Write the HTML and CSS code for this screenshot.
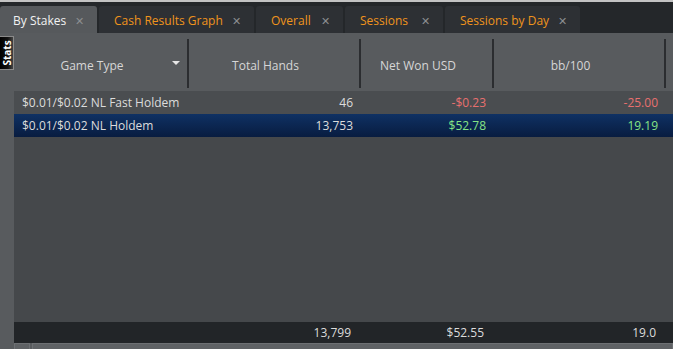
FILE: index.html
```html
<!DOCTYPE html>
<html lang="en">
<head>
    <meta charset="UTF-8">
    <meta name="viewport" content="width=device-width, initial-scale=1.0">
    <title>By Stakes</title>
    <link rel="stylesheet" href="styles.css">
</head>
<body>
    <div class="topline"></div>
    <div class="tabbar">
        <div class="tab active">By Stakes <span class="close">&#x2715;</span></div>
        <div class="tab">Cash Results Graph <span class="close">&#x2715;</span></div>
        <div class="tab">Overall <span class="close">&#x2715;</span></div>
        <div class="tab">Sessions <span class="close">&#x2715;</span></div>
        <div class="tab">Sessions by Day <span class="close">&#x2715;</span></div>
    </div>
    <div class="main">
        <div class="side">
            <div class="side-label"><span>Stats</span></div>
        </div>
        <div class="grid">
            <div class="head">
                <div class="hcell">Game Type <span class="sort"></span></div>
                <div class="hcell">Total Hands</div>
                <div class="hcell">Net Won USD</div>
                <div class="hcell">bb/100</div>
                <div class="hcell last"></div>
            </div>
            <div class="row">
                <div class="cell name">$0.01/$0.02 NL Fast Holdem</div>
                <div class="cell num">46</div>
                <div class="cell num neg">-$0.23</div>
                <div class="cell num neg">-25.00</div>
                <div class="cell"></div>
            </div>
            <div class="row selected">
                <div class="cell name">$0.01/$0.02 NL Holdem</div>
                <div class="cell num">13,753</div>
                <div class="cell num pos">$52.78</div>
                <div class="cell num pos">19.19</div>
                <div class="cell"></div>
            </div>
            <div class="empty"></div>
            <div class="row total">
                <div class="cell name"></div>
                <div class="cell num">13,799</div>
                <div class="cell num">$52.55</div>
                <div class="cell num">19.0</div>
                <div class="cell"></div>
            </div>
        </div>
    </div>
    <div class="bottom">
        <div class="btab first"></div>
        <div class="btab"></div>
    </div>
</body>
</html>
```

FILE: styles.css
```css
* { box-sizing: border-box; }
html, body { margin: 0; height: 100%; }
body { font-family: "Open Sans", "Noto Sans", sans-serif; font-size: 12px; background: #585b5e; display: flex; flex-direction: column; overflow: hidden; }

.topline { height: 2px; background: #c3c3c3; }

.tabbar { height: 31px; background: #24272a; display: flex; align-items: flex-end; gap: 2px; padding-top: 4px; }
.tab { height: 27px; background: #2d3034; color: #f0941c; display: flex; align-items: center; padding: 1px 13px 0 15px; border-radius: 3px 3px 0 0; white-space: nowrap; }
.tab:nth-child(1) { width: 97px; padding-left: 13px; }
.tab:nth-child(2) { width: 155px; }
.tab:nth-child(3) { width: 87px; }
.tab:nth-child(4) { width: 98px; }
.tab:nth-child(5) { width: 135px; }
.tab.active { background: #56595c; color: #f2f2f2; }
.close { margin-left: auto; color: #8c8e90; font-size: 11px; }

.main { flex: 1; display: flex; min-height: 0; }
.side { width: 14px; background: #585b5e; padding-top: 3px; }
.side-label { width: 14px; height: 34px; background: linear-gradient(to right, #000 0%, #111 60%, #444 100%); border: 1px solid #8a8a8a; border-left: none; display: flex; align-items: center; justify-content: center; }
.side-label span { transform: rotate(-90deg); color: #fff; font-size: 10px; font-weight: bold; white-space: nowrap; }

.grid { flex: 1; display: flex; flex-direction: column; }
.head, .row { display: grid; grid-template-columns: 175px 172px 133px 172px 1fr; }
.head { height: 58px; background: #585b5e; }
.hcell { margin: 6px 0 3px; border-right: 2px solid #2b2d30; color: #d6d6d6; font-size: 12px; display: flex; align-items: center; justify-content: center; padding: 3px 17px 0 0; position: relative; }
.hcell.last { border-right: none; }
.sort { position: absolute; right: 7px; top: 22px; width: 0; height: 0; border-left: 4px solid transparent; border-right: 4px solid transparent; border-top: 4px solid #e6e6e6; }

.row { height: 23px; background: #4a4d50; color: #dcdcdc; }
.row.selected { background: linear-gradient(#0f3163, #081c40); }
.cell { display: flex; align-items: center; white-space: nowrap; }
.cell.name { padding-left: 8px; }
.cell.num { justify-content: flex-end; padding-right: 8px; }
.neg { color: #e8706f; }
.pos { color: #86e486; }

.empty { flex: 1; background: #45484b; }
.row.total { height: 21px; background: #222528; }
.row.total .cell.num { padding-right: 10px; }

.bottom { height: 6px; background: #585b5e; display: flex; gap: 2px; padding-left: 14px; }
.btab { width: 16px; background: #5f6265; border: 1px solid #6d7073; border-bottom: none; }
.btab:last-child { flex: 1; }
```
